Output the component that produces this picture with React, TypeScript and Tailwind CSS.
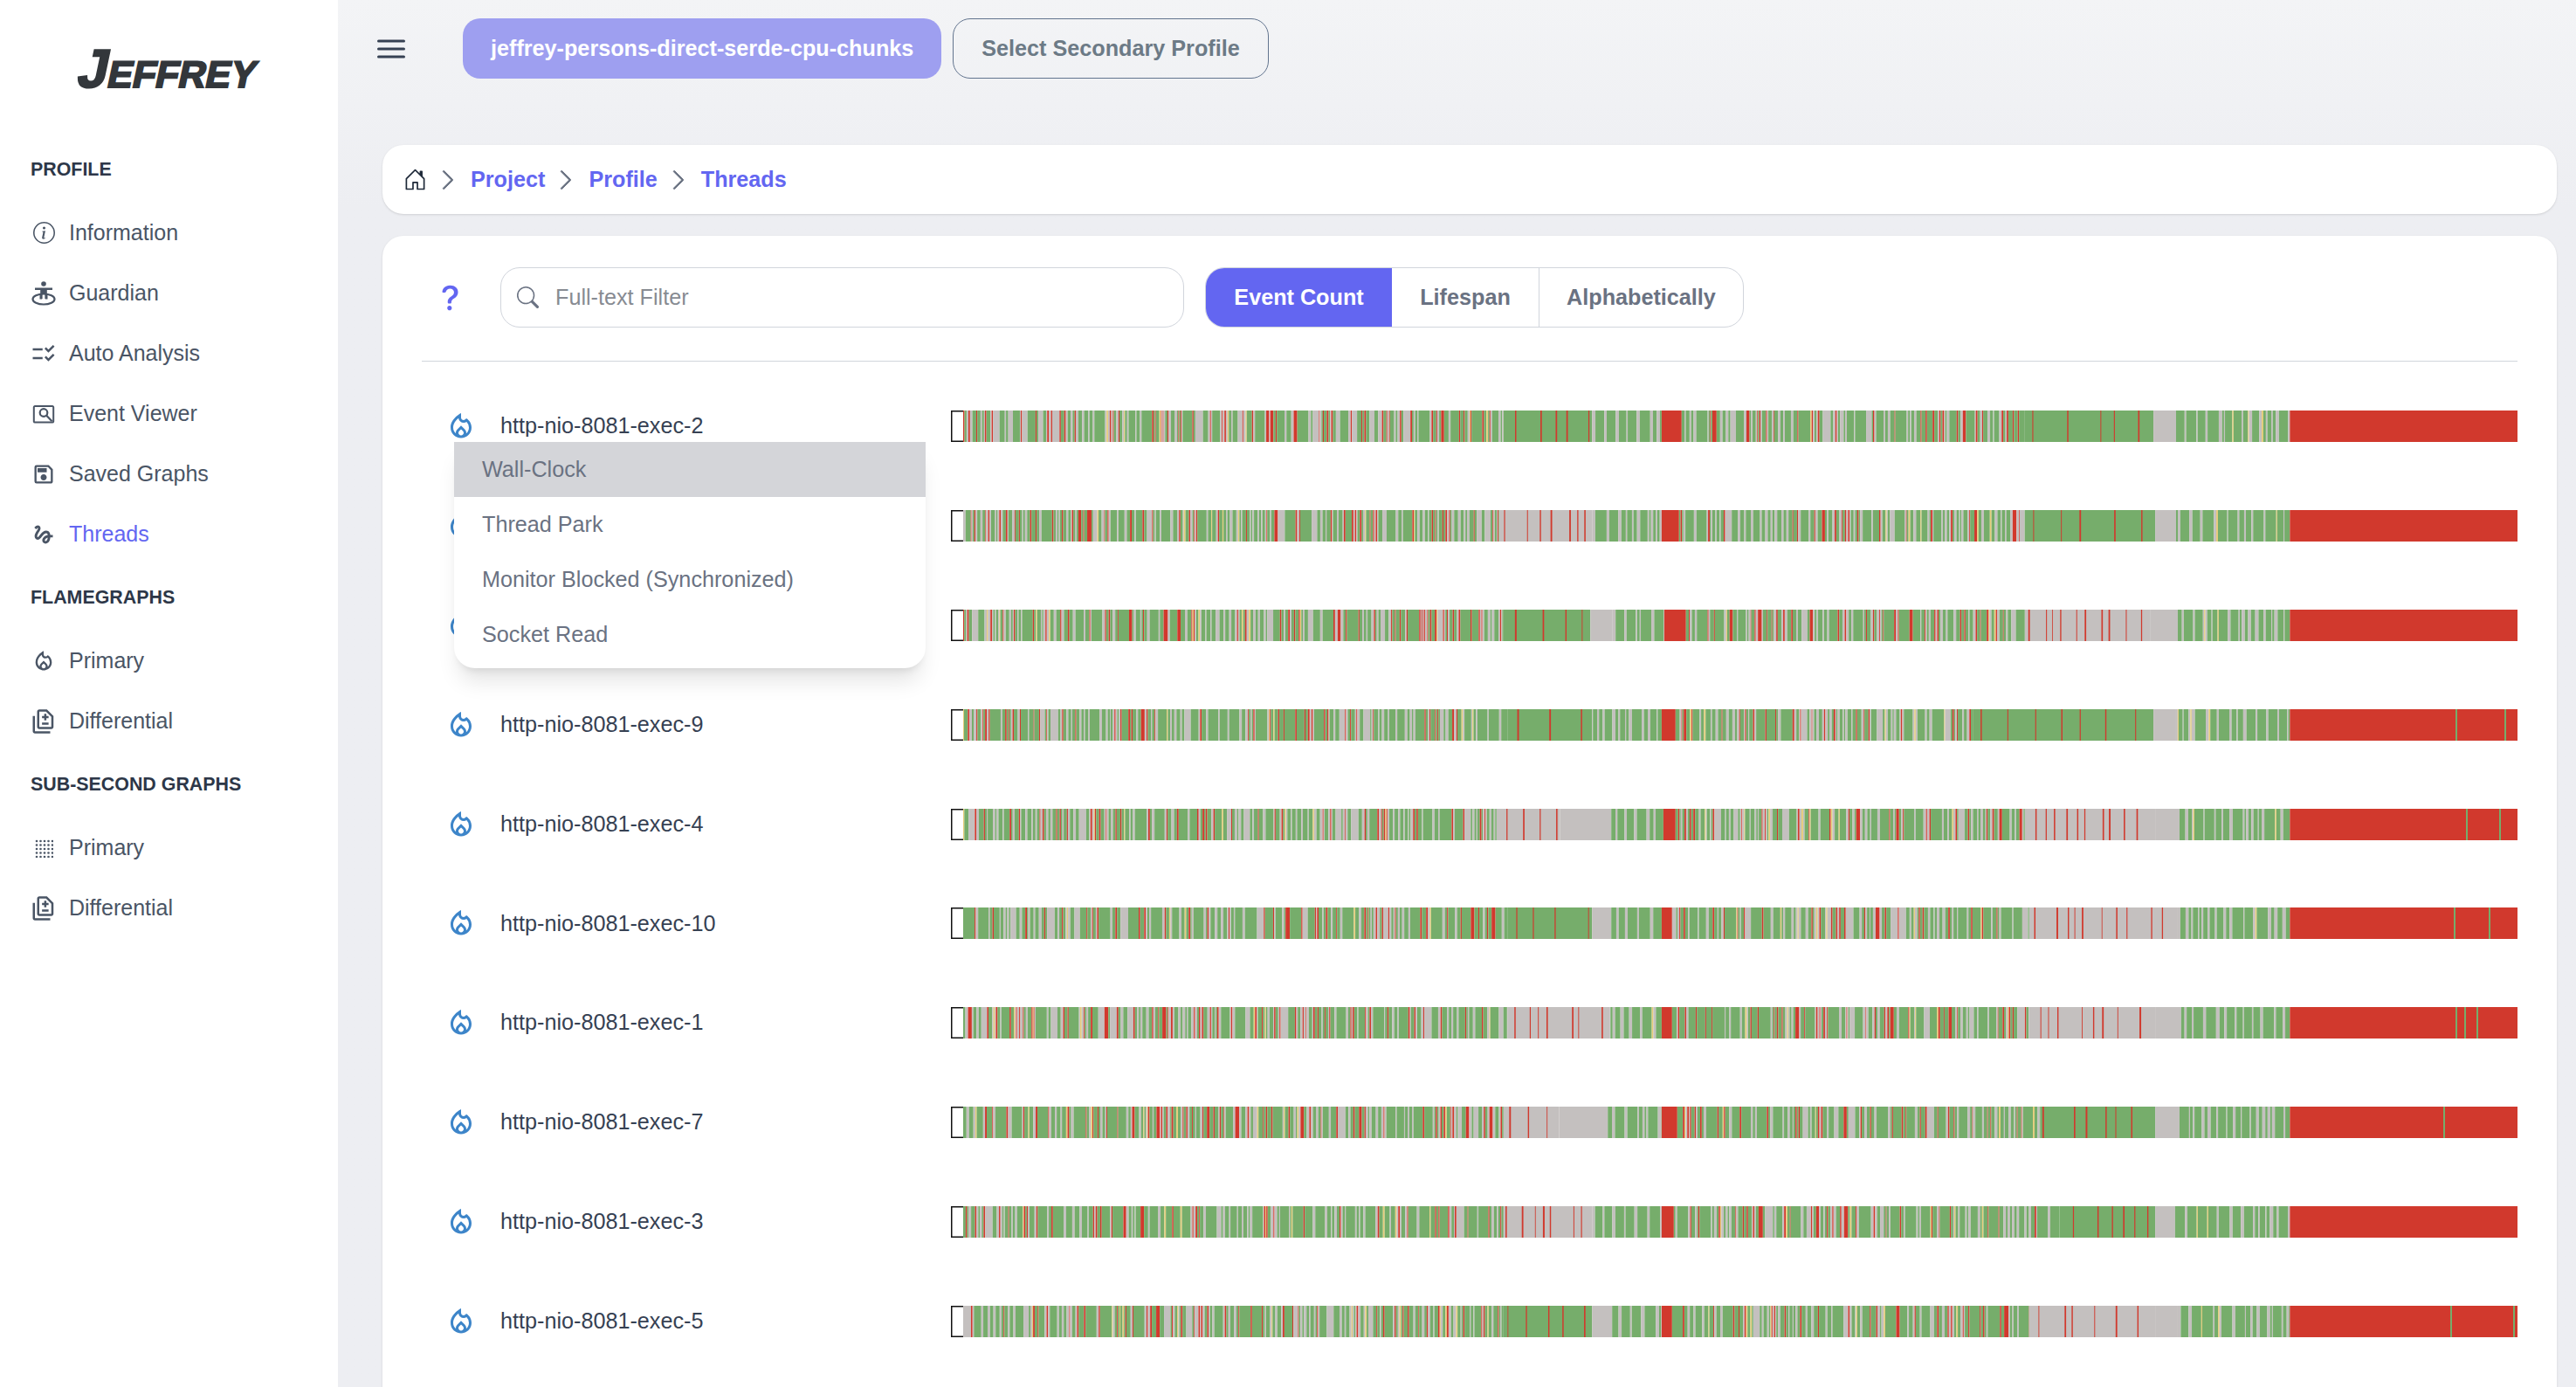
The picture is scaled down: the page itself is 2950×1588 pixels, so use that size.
import type { ReactNode } from "react";
import { BsChevronRight, BsHouseDoor, BsInfoCircle, BsQuestionLg, BsSearch } from "react-icons/bs";
import {
  MdChecklistRtl,
  MdOutlineDifference,
  MdOutlineGesture,
  MdOutlineLocalFireDepartment,
  MdOutlineSave,
} from "react-icons/md";

const GREEN = "#76ad6b";
const GREY = "#c4c0bf";
const RED = "#d1392d";
const YELLOW = "#e6cd7c";

const BAR_WIDTH = 1794;
const BAR_HEIGHT = 36;
const BOX_WIDTH = 14;

type Zone = [end: number, kind: "mix" | "greenRed" | "greyRed" | "greenGrey" | "grey" | "red"];

type Thread = { name: string; seed: number; zones: Zone[]; tail: number[] };

// the second and third names sit under the open menu, so they are left blank
const threads: Thread[] = [
  {
    name: "http-nio-8081-exec-2",
    seed: 11,
    zones: [[640, "mix"], [742, "greenRed"], [822, "greenGrey"], [845, "red"], [1240, "mix"], [1388, "greenRed"], [1414, "grey"], [1545, "greenGrey"]],
    tail: [],
  },
  {
    name: "",
    seed: 23,
    zones: [[635, "mix"], [742, "greyRed"], [822, "greenGrey"], [842, "red"], [1240, "mix"], [1390, "greenRed"], [1414, "grey"], [1545, "greenGrey"]],
    tail: [],
  },
  {
    name: "",
    seed: 37,
    zones: [[640, "mix"], [740, "greenRed"], [765, "grey"], [825, "greenGrey"], [850, "red"], [1240, "mix"], [1384, "greyRed"], [1416, "grey"], [1545, "greenGrey"]],
    tail: [],
  },
  {
    name: "http-nio-8081-exec-9",
    seed: 41,
    zones: [[610, "mix"], [645, "greenGrey"], [742, "greenRed"], [822, "greenGrey"], [838, "red"], [1180, "mix"], [1388, "greenRed"], [1414, "grey"], [1545, "greenGrey"]],
    tail: [2812, 2868],
  },
  {
    name: "http-nio-8081-exec-4",
    seed: 53,
    zones: [[632, "mix"], [705, "greyRed"], [764, "grey"], [824, "greenGrey"], [838, "red"], [1240, "mix"], [1390, "greyRed"], [1418, "grey"], [1545, "greenGrey"]],
    tail: [2824, 2862],
  },
  {
    name: "http-nio-8081-exec-10",
    seed: 67,
    zones: [[645, "mix"], [742, "greenRed"], [764, "grey"], [822, "greenGrey"], [834, "red"], [1245, "mix"], [1416, "greyRed"], [1545, "greenGrey"]],
    tail: [2810, 2850],
  },
  {
    name: "http-nio-8081-exec-1",
    seed: 71,
    zones: [[645, "mix"], [762, "greyRed"], [822, "greenGrey"], [834, "red"], [1245, "mix"], [1390, "greyRed"], [1420, "grey"], [1545, "greenGrey"]],
    tail: [2812, 2822, 2836],
  },
  {
    name: "http-nio-8081-exec-7",
    seed: 83,
    zones: [[640, "mix"], [704, "greyRed"], [760, "grey"], [822, "greenGrey"], [840, "red"], [1258, "mix"], [1390, "greenRed"], [1418, "grey"], [1545, "greenGrey"]],
    tail: [2798],
  },
  {
    name: "http-nio-8081-exec-3",
    seed: 97,
    zones: [[640, "mix"], [742, "greyRed"], [822, "greenGrey"], [836, "red"], [1280, "mix"], [1390, "greenRed"], [1410, "grey"], [1545, "greenGrey"]],
    tail: [],
  },
  {
    name: "http-nio-8081-exec-5",
    seed: 101,
    zones: [[640, "mix"], [742, "greenRed"], [765, "grey"], [822, "greenGrey"], [834, "red"], [1245, "mix"], [1390, "greyRed"], [1416, "grey"], [1545, "greenGrey"]],
    tail: [2806, 2878],
  },
];

function random(seed: number) {
  let a = seed * 2654435761;
  return () => {
    a = (a + 0x6d2b79f5) | 0;
    let t = Math.imul(a ^ (a >>> 15), 1 | a);
    t = (t + Math.imul(t ^ (t >>> 7), 61 | t)) ^ t;
    return ((t ^ (t >>> 14)) >>> 0) / 4294967296;
  };
}

type Stripe = { x: number; w: number; fill: string };

// zone ends were read off a crop starting at x=1085, bars start at x=1089
const toBar = (z: number) => 1085 + z / 1.005 - 1089;

function buildStripes(thread: Thread): Stripe[] {
  const r = random(thread.seed);
  const between = (lo: number, hi: number) => lo + r() * (hi - lo);
  const out: Stripe[] = [];
  let x = BOX_WIDTH;
  for (const [end, kind] of thread.zones) {
    const stop = toBar(end);
    if (kind === "red" || kind === "grey") {
      out.push({ x, w: stop - x, fill: kind === "red" ? RED : GREY });
      x = stop;
      continue;
    }
    if (kind === "greenRed" || kind === "greyRed") {
      const base = kind === "greenRed" ? GREEN : GREY;
      out.push({ x, w: stop - x, fill: base });
      let p = x + between(2, 16);
      while (p < stop - 2) {
        out.push({ x: p, w: between(0.8, 2), fill: RED });
        p += kind === "greenRed" ? between(10, 40) : between(5, 30);
      }
      x = stop;
      continue;
    }
    let last = "";
    while (x < stop) {
      const roll = r();
      let fill = GREEN;
      let w = 0;
      if (kind === "greenGrey") {
        if (roll < 0.52) {
          fill = GREEN;
          w = between(2, 13);
        } else if (roll < 0.97) {
          fill = GREY;
          w = between(0.8, 4);
        } else {
          fill = YELLOW;
          w = between(1, 2);
        }
      } else if (roll < 0.5) {
        fill = GREEN;
        w = r() < 0.25 ? between(5, 14) : between(1.5, 5);
      } else if (roll < 0.81) {
        fill = GREY;
        w = r() < 0.12 ? between(4, 9) : between(1, 3);
      } else if (roll < 0.975) {
        fill = RED;
        w = r() < 0.08 ? between(3, 5) : between(0.8, 2);
      } else {
        fill = YELLOW;
        w = between(1, 2);
      }
      if (fill === last) continue;
      last = fill;
      w = Math.min(w, stop - x);
      out.push({ x, w, fill });
      x += w;
    }
  }
  out.push({ x, w: BAR_WIDTH - x, fill: RED });
  for (const t of thread.tail) out.push({ x: t - 1089, w: 2, fill: GREEN });
  return out;
}

function ThreadBar({ thread }: { thread: Thread }) {
  const stripes = buildStripes(thread);
  return (
    <svg width={BAR_WIDTH} height={BAR_HEIGHT} viewBox={`0 0 ${BAR_WIDTH} ${BAR_HEIGHT}`} className="block shrink-0">
      {stripes.map((s, i) => (
        <rect key={i} x={s.x} y={0} width={s.w} height={BAR_HEIGHT} fill={s.fill} />
      ))}
      <path d={`M${BOX_WIDTH} 0.75H0.75V${BAR_HEIGHT - 0.75}H${BOX_WIDTH}`} fill="none" stroke="#111" strokeWidth={1.5} />
    </svg>
  );
}

function GuardianIcon() {
  return (
    <svg width={30} height={30} viewBox="0 0 30 30" fill="currentColor">
      <circle cx={15} cy={4} r={2.8} />
      <path d="M5 8.5h20v2.4h-6.2V21h-2.3v-6h-3V21h-2.3V10.9H5z" />
      <ellipse cx={15} cy={21.5} rx={12.5} ry={6} fill="none" stroke="currentColor" strokeWidth={2.2} />
      <path d="M10.5 15h9v6.5h-2.7v-6h-3.6v6h-2.7z" />
    </svg>
  );
}

function EventViewerIcon() {
  return (
    <svg width={26} height={26} viewBox="0 0 26 26" fill="none" stroke="currentColor" strokeWidth={2}>
      <path d="M3 4h20a1.2 1.2 0 0 1 1.2 1.2V21.500a1.2 1.2 0 0 1-1.2 1H3a1.200 1.200 0 0 1-1.200-1V5.200A1.200 1.200 0 0 1 3 4z" />
      <circle cx={13} cy={11.500} r={4.300} strokeWidth={2.200} />
      <path d="M16 14.500l6.500 6.800" strokeWidth={2.200} />
    </svg>
  );
}

function DotsIcon() {
  const cells = [0, 1, 2, 3, 4];
  return (
    <svg width={22} height={22} viewBox="0 0 22 22" fill="currentColor">
      {cells.map((row) =>
        cells.map((col) => <circle key={`${row}-${col}`} cx={3 + col * 4.500} cy={3 + row * 4.500} r={1.300} />),
      )}
    </svg>
  );
}

function NavItem({ icon, label, active }: { icon: ReactNode; label: string; active?: boolean }) {
  return (
    <li className="flex h-[69px] items-center gap-[14px] pl-[35px] text-gray-600">
      <span className="flex w-[30px] shrink-0 items-center justify-center">{icon}</span>
      <span className={active ? "text-[#6366f1]" : ""}>{label}</span>
    </li>
  );
}

function NavHeading({ children }: { children: ReactNode }) {
  return (
    <p className="flex h-[76px] items-center pl-[35px] text-[21.400px] font-bold text-[#2d3748]">{children}</p>
  );
}

function Crumb() {
  return <BsChevronRight size={26} stroke="currentColor" strokeWidth={0.6} className="mr-[13px] ml-[11px] shrink-0 text-gray-500" />;
}

function Sidebar() {
  return (
    <aside className="w-[387px] shrink-0 bg-white text-[25px]">
      <div className="flex h-[156px] items-start justify-center pt-[47px]">
        <span className="-skew-x-12 text-[62px] leading-[64px] font-bold text-[#33373b] [font-variant-caps:small-caps] [-webkit-text-stroke:2px_#33373b]">
          Jeffrey
        </span>
      </div>
      <nav>
        <NavHeading>PROFILE</NavHeading>
        <ul>
          <NavItem icon={<BsInfoCircle size={25} />} label="Information" />
          <NavItem icon={<GuardianIcon />} label="Guardian" />
          <NavItem icon={<MdChecklistRtl size={30} />} label="Auto Analysis" />
          <NavItem icon={<EventViewerIcon />} label="Event Viewer" />
          <NavItem icon={<MdOutlineSave size={28} />} label="Saved Graphs" />
          <NavItem icon={<MdOutlineGesture size={28} />} label="Threads" active />
        </ul>
        <NavHeading>FLAMEGRAPHS</NavHeading>
        <ul>
          <NavItem icon={<MdOutlineLocalFireDepartment size={28} />} label="Primary" />
          <NavItem icon={<MdOutlineDifference size={30} />} label="Differential" />
        </ul>
        <NavHeading>SUB-SECOND GRAPHS</NavHeading>
        <ul>
          <NavItem icon={<DotsIcon />} label="Primary" />
          <NavItem icon={<MdOutlineDifference size={30} />} label="Differential" />
        </ul>
      </nav>
    </aside>
  );
}

function Toolbar() {
  return (
    <div className="flex items-center border-b border-gray-300 pb-[38px]">
      <span className="flex w-[90px] shrink-0 justify-center pr-[24px] text-[#6366f1]">
        <BsQuestionLg size={38} />
      </span>
      <div className="flex h-[69px] w-[783px] items-center gap-[19px] rounded-[22px] border border-gray-300 pl-[18px]">
        <BsSearch size={25} className="shrink-0 text-gray-500" />
        <input
          placeholder="Full-text Filter"
          className="w-full bg-transparent text-gray-700 outline-none placeholder:text-[#878b92]"
        />
      </div>
      <div className="ml-[24px] flex h-[69px] overflow-hidden rounded-[22px] border border-gray-300 font-bold text-gray-500">
        <span className="flex w-[213px] items-center justify-center bg-[#6366f1] text-white">Event Count</span>
        <span className="flex w-[168px] items-center justify-center">Lifespan</span>
        <span className="flex w-[234px] items-center justify-center border-l border-gray-300">Alphabetically</span>
      </div>
    </div>
  );
}

function ThreadRow({ thread }: { thread: Thread }) {
  return (
    <li className="flex h-[113.900px] items-center">
      <span className="flex w-[90px] shrink-0 justify-center text-[#3d85c9]">
        <MdOutlineLocalFireDepartment size={36} />
      </span>
      <span className="w-[516px] shrink-0 text-gray-700">{thread.name}</span>
      <ThreadBar thread={thread} />
    </li>
  );
}

function EventMenu() {
  const items = ["Wall-Clock", "Thread Park", "Monitor Blocked (Synchronized)", "Socket Read"];
  return (
    <ul className="absolute top-[230px] left-[82px] w-[540px] rounded-[24px] bg-white py-[6px] pb-[7px] text-gray-500 shadow-xl">
      {items.map((item, i) => (
        <li key={item} className={`flex h-[63px] items-center px-[32px] ${i === 0 ? "bg-[#d4d5d9]" : ""}`}>
          {item}
        </li>
      ))}
    </ul>
  );
}

export default function App() {
  return (
    <div className="flex h-screen overflow-hidden text-[25.200px] [font-family:'Liberation_Sans',Arial,sans-serif]">
      <Sidebar />
      <main className="min-w-0 flex-1 bg-linear-to-b from-[#f3f4f6] to-[#edeef2] to-15%">
        <header className="flex items-center pt-[21px]">
          <svg width={32} height={22} viewBox="0 0 32 22" className="ml-[45px] shrink-0 text-gray-700" stroke="currentColor" strokeWidth={3} strokeLinecap="round">
            <path d="M1.500 2h29M1.500 11h29M1.500 20h29" />
          </svg>
          <button className="ml-[66px] h-[69px] rounded-[20px] bg-[#9e9ff0] px-[32px] font-bold text-white">
            jeffrey-persons-direct-serde-cpu-chunks
          </button>
          <button className="ml-[13px] h-[69px] rounded-[20px] border border-slate-500 px-[32px] font-bold text-[#6c7a86]">
            Select Secondary Profile
          </button>
        </header>

        <div className="mt-[76px] mr-[22px] ml-[51px] flex h-[79px] items-center rounded-[24px] bg-white pl-[24px] font-bold text-[#6366f1] shadow-sm">
          <BsHouseDoor size={27} className="shrink-0 text-gray-800" />
          <Crumb />
          <span>Project</span>
          <Crumb />
          <span>Profile</span>
          <Crumb />
          <span>Threads</span>
        </div>

        <section className="relative mt-[25px] mr-[22px] ml-[51px] h-[1400px] rounded-[24px] bg-white px-[45px] pt-[36px] shadow-sm">
          <Toolbar />
          <ul className="mt-[17px]">
            {threads.map((t) => (
              <ThreadRow key={t.seed} thread={t} />
            ))}
          </ul>
          <EventMenu />
        </section>
      </main>
    </div>
  );
}
